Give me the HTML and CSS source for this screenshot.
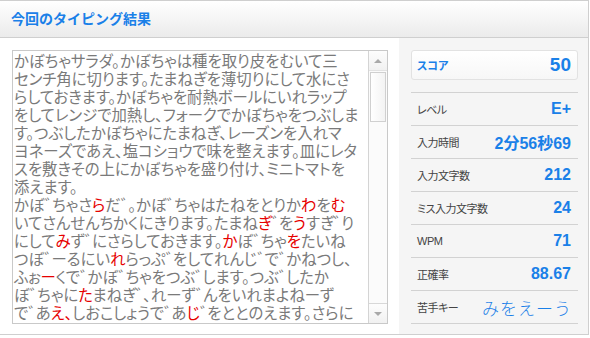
FILE: index.html
```html
<!DOCTYPE html>
<html>
	<head>
		<meta charset="UTF-8">
		<title>今回のタイピング結果</title>
		<link rel="stylesheet" href="styles.css">
	</head>
	<body>
		<div class="result">
			<div class="result-head">今回のタイピング結果</div>
			<div class="result-body">
				<div class="answer-pane">
					<div class="answer">
						<div class="answer-text">
							かぼちゃサラダ。かぼちゃは種を取り皮をむいて三<br>
							センチ角に切ります。たまねぎを薄切りにして水にさ<br>
							らしておきます。かぼちゃを耐熱ボールにいれラップ<br>
							をしてレンジで加熱し、フォークでかぼちゃをつぶしま<br>
							す。つぶしたかぼちゃにたまねぎ、レーズンを入れマ<br>
							ヨネーズであえ、塩コショウで味を整えます。皿にレタ<br>
							スを敷きその上にかぼちゃを盛り付け、ミニトマトを<br>
							添えます。<br>
							かぼ<i>゛</i>ちゃさ<em>ら</em>だ<i>゛</i>。かぼ<i>゛</i>ちゃはたねをとりか<em>わ</em>を<em>む</em><br>
							いてさんせんちかくにきります。たまね<em>ぎ</em><i>゛</i>を<em>う</em>すぎ<i>゛</i>り<br>
							にして<em>み</em>ず<i>゛</i>にさらしておきます。<em>か</em>ぼ<i>゛</i>ちゃ<em>を</em>たいね<br>
							つぼ<i>゛</i>ーるにい<em>れ</em>らっぷ<i>゛</i>をしてれんじ<i>゛</i>で<i>゛</i>かねつし、<br>
							ふぉ<em>ー</em>くで<i>゛</i>かぼ<i>゛</i>ちゃをつぶ<i>゛</i>します。つぶ<i>゛</i>したか<br>
							ぼ<i>゛</i>ちゃに<em>た</em>まねぎ<i>゛</i>、れーず<i>゛</i>んをいれまよねーず<br>
							で<i>゛</i>あ<em>え、</em>しおこしょうで<i>゛</i>あ<em>じ</em><i>゛</i>をととのえます。さらに
						</div>
						<div class="scrollbar">
							<div class="sb-btn sb-up"></div>
							<div class="sb-thumb"></div>
							<div class="sb-track"></div>
							<div class="sb-btn sb-down"></div>
						</div>
					</div>
				</div>
				<div class="stats-pane">
					<div class="score">
						<span class="score-label">スコア</span>
						<span class="score-value">50</span>
					</div>
					<ul class="stats">
						<li><span class="stat-label">レベル</span><span class="stat-value">E+</span></li>
						<li><span class="stat-label">入力時間</span><span class="stat-value">2分56秒69</span></li>
						<li><span class="stat-label">入力文字数</span><span class="stat-value">212</span></li>
						<li><span class="stat-label">ミス入力文字数</span><span class="stat-value">24</span></li>
						<li><span class="stat-label">WPM</span><span class="stat-value">71</span></li>
						<li><span class="stat-label">正確率</span><span class="stat-value">88.67</span></li>
						<li><span class="stat-label">苦手キー</span><span class="stat-value weak-keys">みをえーう</span></li>
					</ul>
				</div>
			</div>
		</div>
	</body>
</html>
```

FILE: styles.css
```css
* {
	padding: 0;
	margin: 0;
	box-sizing: border-box;
}
body {
	background: #fff;
	font-family: "Liberation Sans", "Noto Sans CJK JP", sans-serif;
}
.result {
	width: 589px;
	border-right: 1px solid #cfcfcf;
	border-bottom: 1px solid #cfcfcf;
}
/*見出し*/
.result-head {
	height: 38px;
	padding-left: 11px;
	border-top: 1px solid #cfcfcf;
	border-bottom: 1px solid #cfcfcf;
	background: linear-gradient(#ffffff, #ebebeb);
	line-height: 35px;
	font-size: 14px;
	font-weight: bold;
	color: #1a80e8;
	font-family: "Noto Sans CJK JP", sans-serif;
}
.result-body {
	display: flex;
}
/*入力した文章*/
.answer-pane {
	width: 399px;
	padding: 12px 11px 10px 12px;
}
.answer {
	display: flex;
	height: 274px;
	border: 1px solid #c9c9c9;
}
.answer-text {
	flex: 1;
	overflow: hidden;
	white-space: nowrap;
	padding: 0 0 0 1px;
	font-family: "Noto Sans CJK JP", sans-serif;
	font-feature-settings: "palt";
	font-size: 15.4px;
	line-height: 18px;
	color: #7a7a7a;
}
.answer-text em {
	font-style: normal;
	color: #e60000;
}
/*濁点だけの文字は幅を詰める*/
.answer-text i {
	font-style: normal;
	margin-right: -8px;
}
.scrollbar {
	width: 19px;
	display: flex;
	flex-direction: column;
	border-left: 1px solid #d4d4d4;
	background: #fbfbfb;
}
.sb-btn {
	height: 20px;
	display: flex;
	align-items: center;
	justify-content: center;
	background: linear-gradient(#fdfdfd, #f1f1f1);
}
.sb-up {
	border-bottom: 1px solid #e2e2e2;
}
.sb-down {
	border-top: 1px solid #d8d8d8;
}
.sb-up::after {
	content: "";
	border-left: 4px solid transparent;
	border-right: 4px solid transparent;
	border-bottom: 4px solid #a9a9a9;
}
.sb-down::after {
	content: "";
	border-left: 4px solid transparent;
	border-right: 4px solid transparent;
	border-top: 4px solid #a9a9a9;
}
.sb-thumb {
	height: 50px;
	margin: 1px 1px 0 1px;
	border: 1px solid #d0d0d0;
	background: linear-gradient(90deg, #ffffff, #f3f3f3);
}
.sb-track {
	flex: 1;
}
/*結果*/
.stats-pane {
	flex: 1;
	background: #f5f5f5;
	padding: 12px 10px 0 12px;
}
.score {
	display: flex;
	justify-content: space-between;
	align-items: center;
	height: 30px;
	padding: 0 6px 0 5px;
	border: 1px solid #e2e2e2;
	border-radius: 3px;
	background: linear-gradient(#ffffff, #f7f7f7);
	margin-bottom: 12px;
}
.score-label {
	font-family: "Noto Sans CJK JP", sans-serif;
	font-feature-settings: "palt";
	font-size: 11px;
	font-weight: bold;
	color: #1a80e8;
}
.score-value {
	font-size: 19px;
	font-weight: bold;
	color: #1a80e8;
}
.stats {
	list-style: none;
	border-top: 1px solid #d2d2d2;
}
.stats li {
	display: flex;
	justify-content: space-between;
	align-items: center;
	height: 33px;
	padding: 0 7px 0 6px;
	border-bottom: 1px solid #d2d2d2;
}
.stat-label {
	font-size: 11px;
	font-feature-settings: "palt";
	letter-spacing: -0.5px;
	color: #444;
}
.stat-value {
	font-size: 16px;
	font-weight: bold;
	color: #1a80e8;
}
.weak-keys {
	font-family: "Noto Sans CJK JP", sans-serif;
	font-weight: 300;
	font-size: 17px;
	letter-spacing: 1px;
	margin-right: -1px;
}
```
